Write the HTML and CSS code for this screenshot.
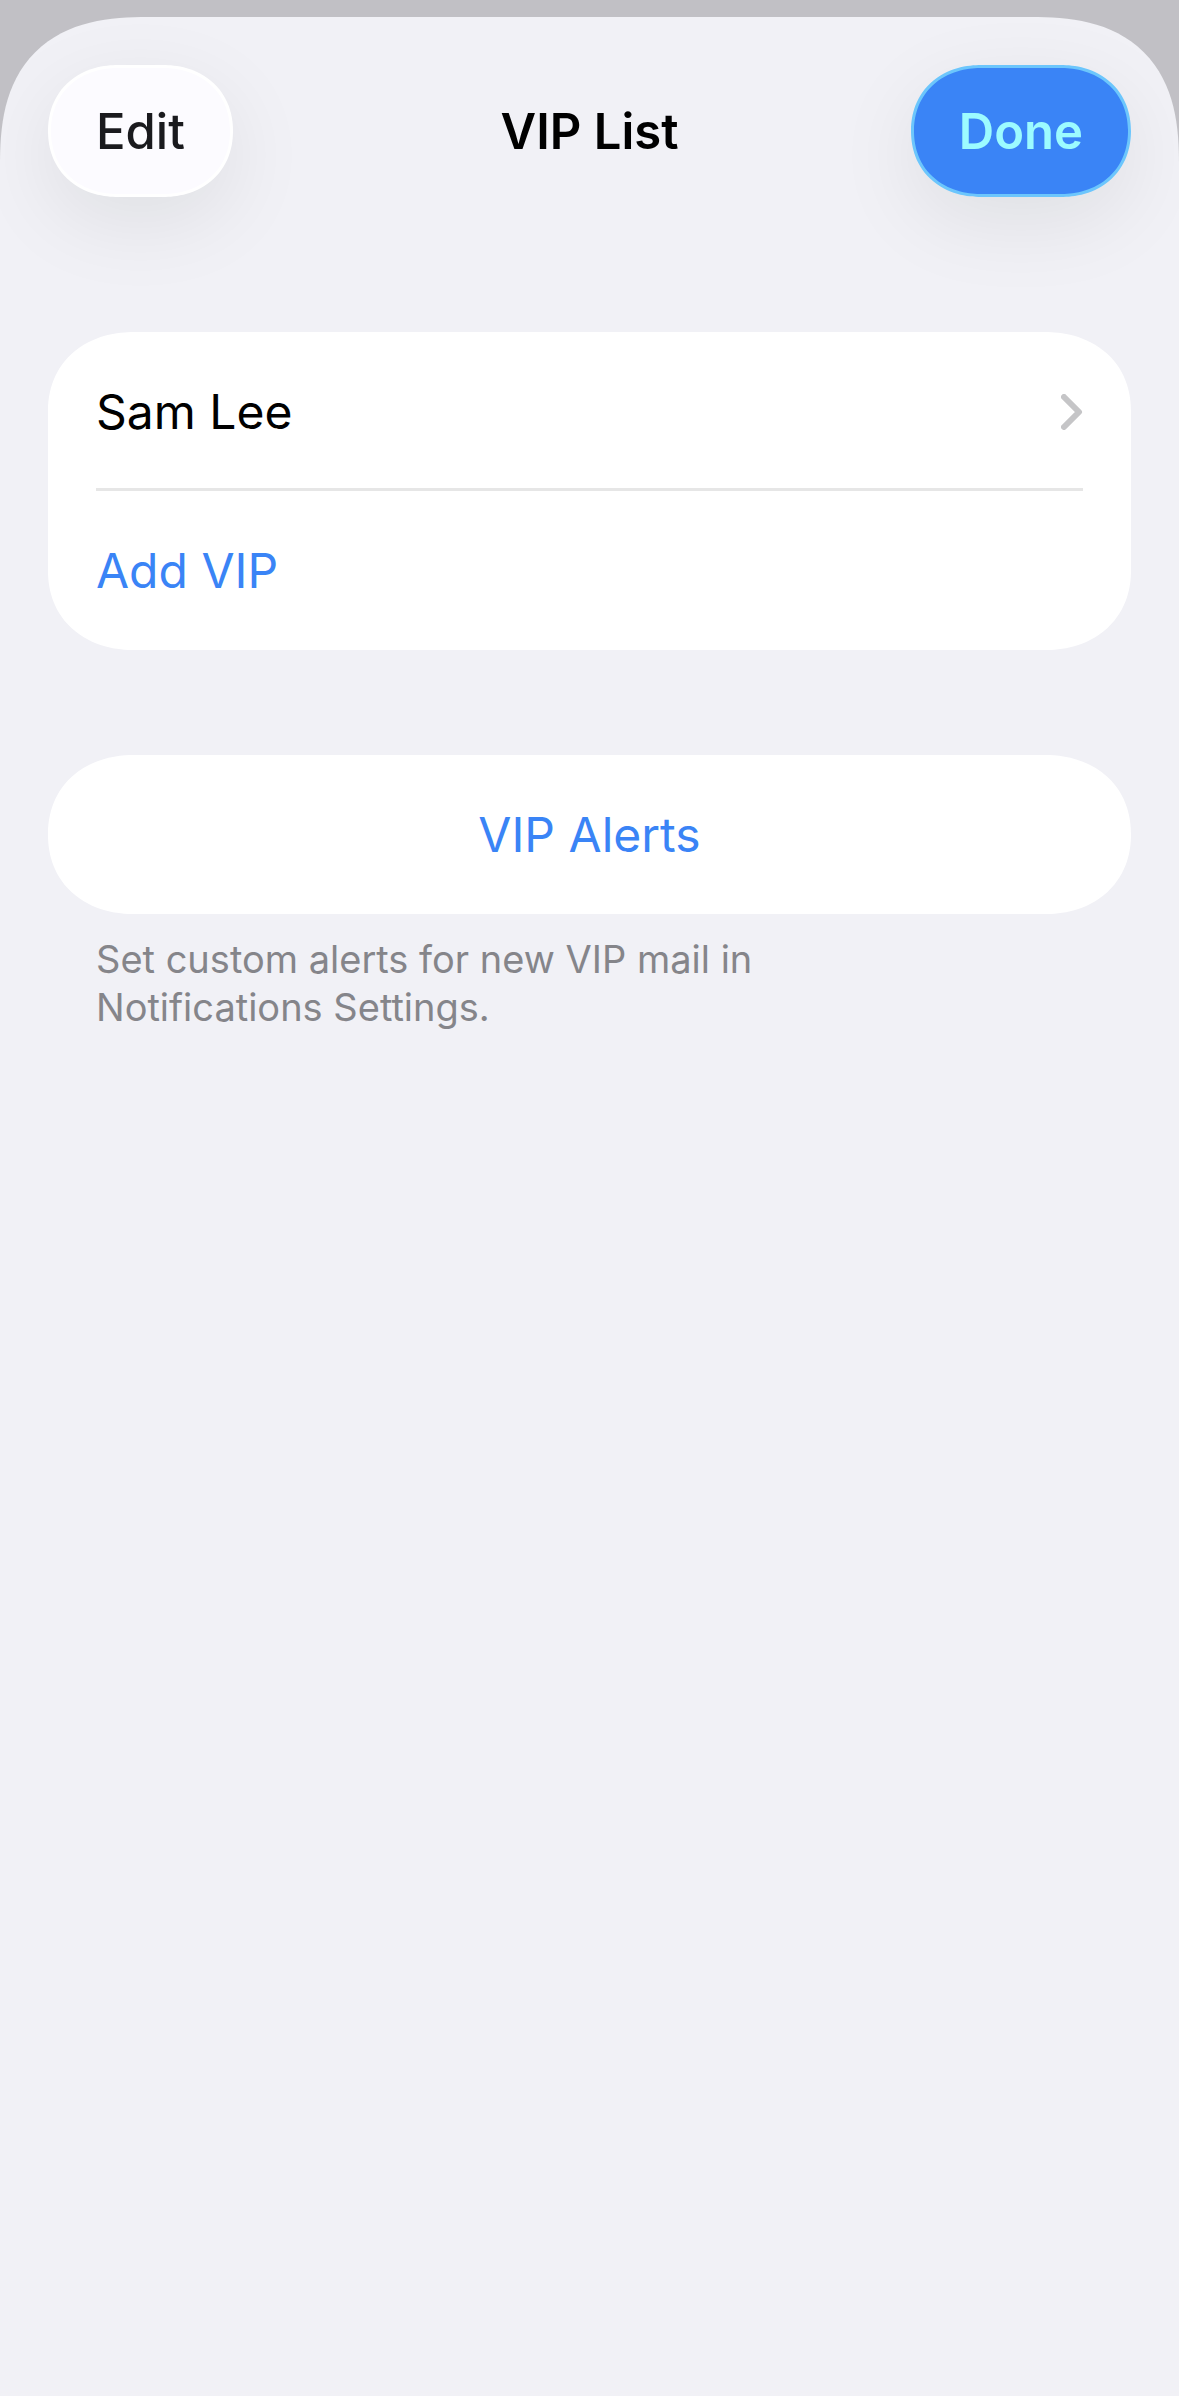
FILE: index.html
```html
<!DOCTYPE html>
<html lang="en">
<head>
    <meta charset="UTF-8">
    <meta name="viewport" content="width=device-width, initial-scale=1.0">
    <title>VIP List</title>
    <link rel="stylesheet" href="styles.css">
</head>
<body>
    <main class="sheet">
        <header class="navbar">
            <button type="button" class="pill">Edit</button>
            <h1 class="title">VIP List</h1>
            <button type="button" class="pill pill-done">Done</button>
        </header>

        <!-- people -->
        <ul class="card">
            <li class="item">
                <a class="row" href="#sam-lee">
                    <span>Sam Lee</span>
                    <svg class="chevron" viewBox="0 0 22 36" aria-hidden="true">
                        <path d="M3 3l15 15-15 15"/>
                    </svg>
                </a>
            </li>
            <li class="item">
                <button type="button" class="row action">Add VIP</button>
            </li>
        </ul>

        <!-- alerts -->
        <section class="card">
            <button type="button" class="row action centered">VIP Alerts</button>
        </section>
        <p class="note">Set custom alerts for new VIP mail in<br>Notifications Settings.</p>
    </main>
</body>
</html>
```

FILE: styles.css
```css
* {
    box-sizing: border-box;
}

body {
    margin: 0;
    padding-top: 17px;
    min-height: 100vh;
    display: flex;
    background: #c1c0c5;
    font-family: Inter, "Liberation Sans", sans-serif;
    font-size: 48px;
    line-height: 60px;
    color: #000;
}

button {
    font: inherit;
    border: none;
    background: none;
    cursor: pointer;
}

.sheet {
    flex: 1;
    padding: 48px;
    background: #f1f1f6;
    border-radius: 115px 115px 0 0;
    overflow: hidden;
}

.navbar {
    display: grid;
    grid-template-columns: 1fr auto 1fr;
    align-items: center;
    margin-bottom: 135px;
}

.title {
    margin: 0;
    padding-top: 2px;
    font-size: 49px;
    font-weight: 600;
}

.pill {
    justify-self: start;
    height: 132px;
    padding: 2px 45px 0;
    border: 3px solid #fff;
    border-radius: 66px;
    background: #fcfbff;
    box-shadow: 0 24px 84px rgba(0, 30, 0, 0.08);
    color: #1a1a1e;
    font-size: 49px;
    font-weight: 500;
}

.pill-done {
    justify-self: end;
    border-color: #6cc6fc;
    background: #3a84f6;
    color: #9cfbff;
    font-weight: 600;
}

.card {
    margin: 0;
    padding: 0 48px;
    list-style: none;
    background: #fff;
    border-radius: 79px;
}

.card + .card {
    margin-top: 105px;
}

.row {
    display: flex;
    align-items: center;
    justify-content: space-between;
    width: 100%;
    height: 159px;
    padding: 0;
    color: #000;
    text-decoration: none;
}

.item:not(:last-child) .row {
    padding-top: 3px;
    border-bottom: 3px solid #e6e6e6;
}

.action {
    color: #3a84f6;
}

.centered {
    justify-content: center;
}

.chevron {
    width: 22px;
    height: 36px;
    fill: none;
    stroke: #c5c5c7;
    stroke-width: 6;
    stroke-linecap: round;
    stroke-linejoin: round;
}

.note {
    margin: 21px 48px 0;
    font-size: 38px;
    line-height: 48px;
    color: #85858a;
}

/* smoother corners where the browser can draw them */
@supports (corner-shape: squircle) {
    .sheet {
        border-radius: 148px 148px 0 0;
        corner-shape: superellipse(1.35);
    }

    .pill {
        border-radius: 70px / 66px;
        corner-shape: superellipse(1.1);
    }

    .card {
        border-radius: 86px / 79px;
        corner-shape: superellipse(1.1);
    }
}
```
